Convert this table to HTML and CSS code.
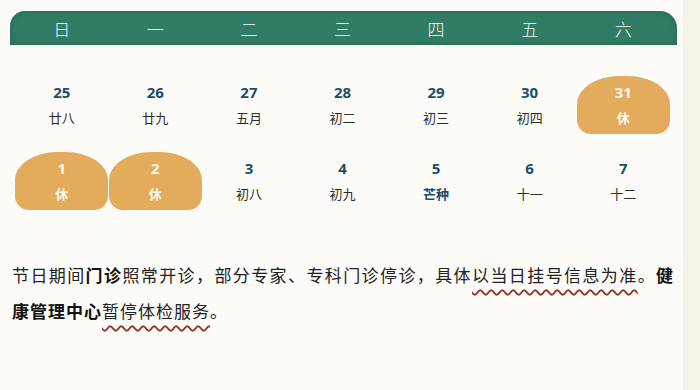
FILE: index.html
```html
<!DOCTYPE html>
<html lang="zh-CN">
<head>
<meta charset="utf-8">
<title>节日日历</title>
<link rel="stylesheet" href="styles.css">
</head>
<body>
<div class="page">
  <div class="week">
    <span>日</span><span>一</span><span>二</span><span>三</span><span>四</span><span>五</span><span>六</span>
  </div>
  <div class="days">
    <div class="day"><b>25</b><i>廿八</i></div>
    <div class="day"><b>26</b><i>廿九</i></div>
    <div class="day"><b>27</b><i>五月</i></div>
    <div class="day"><b>28</b><i>初二</i></div>
    <div class="day"><b>29</b><i>初三</i></div>
    <div class="day"><b>30</b><i>初四</i></div>
    <div class="day off"><b>31</b><i>休</i></div>
    <div class="day off"><b>1</b><i>休</i></div>
    <div class="day off"><b>2</b><i>休</i></div>
    <div class="day"><b>3</b><i>初八</i></div>
    <div class="day"><b>4</b><i>初九</i></div>
    <div class="day"><b>5</b><i class="term">芒种</i></div>
    <div class="day"><b>6</b><i>十一</i></div>
    <div class="day"><b>7</b><i>十二</i></div>
  </div>
  <p class="note">节日期间<strong>门诊</strong>照常开诊，部分专家、专科门诊停诊，具体<span class="wave">以当日挂号信息为准</span>。<strong>健康管理中心</strong><span class="wave">暂停体检服务</span>。</p>
</div>
</body>
</html>
```
FILE: styles.css
```css
html, body {
  margin: 0;
  padding: 0;
  background: #f8f3e7;
}
body {
  width: 700px;
  height: 390px;
  overflow: hidden;
  font-family: "Noto Sans CJK SC", "Noto Sans", sans-serif;
}
.page {
  width: 683px;
  height: 390px;
  background: #fcfbf8;
  padding: 11px 0 0 10px;
  box-sizing: border-box;
}
.week {
  width: 667px;
  height: 34px;
  box-sizing: border-box;
  padding: 0 7px 0 5px;
  display: grid;
  grid-template-columns: repeat(7, 1fr);
  align-items: center;
  background: #317c64;
  border-radius: 15px 17px 0 0;
  box-shadow: inset 0 0 6px rgba(0, 40, 25, 0.25);
  color: #f4f7f3;
  font-size: 17px;
  font-weight: 300;
  text-align: center;
}
.days {
  margin: 31px 0 0 5px;
  width: 655px;
  display: grid;
  grid-template-columns: repeat(7, 1fr);
  row-gap: 18px;
}
.day {
  height: 58px;
  box-sizing: border-box;
  padding-top: 6px;
  display: flex;
  flex-direction: column;
  align-items: center;
  gap: 6px;
}
.day b {
  font-family: "Open Sans", "Noto Sans", sans-serif;
  font-weight: 700;
  font-size: 15px;
  line-height: 20px;
  color: #1d4d6c;
}
.day i {
  font-style: normal;
  font-size: 13px;
  line-height: 20px;
  color: #2b2b2b;
}
.day i.term {
  color: #1d4d6c;
  font-weight: 700;
}
.day.off {
  width: 93px;
  justify-self: center;
  background: #e3ac5c;
  border-radius: 42px 42px 14px 14px / 28px 28px 14px 14px;
}
.day.off b {
  color: #fdf7ec;
}
.day.off i {
  color: #fdf7ec;
  font-weight: 700;
}
.note {
  margin: 47px 0 0 2px;
  width: 662px;
  font-size: 17px;
  line-height: 36px;
  color: #222;
  text-align: justify;
  letter-spacing: 1px;
}
.note strong {
  font-weight: 700;
  color: #111;
}
.wave {
  text-decoration: underline wavy #8c3a2c;
  text-decoration-thickness: 2px;
  text-underline-offset: 7px;
}
```
